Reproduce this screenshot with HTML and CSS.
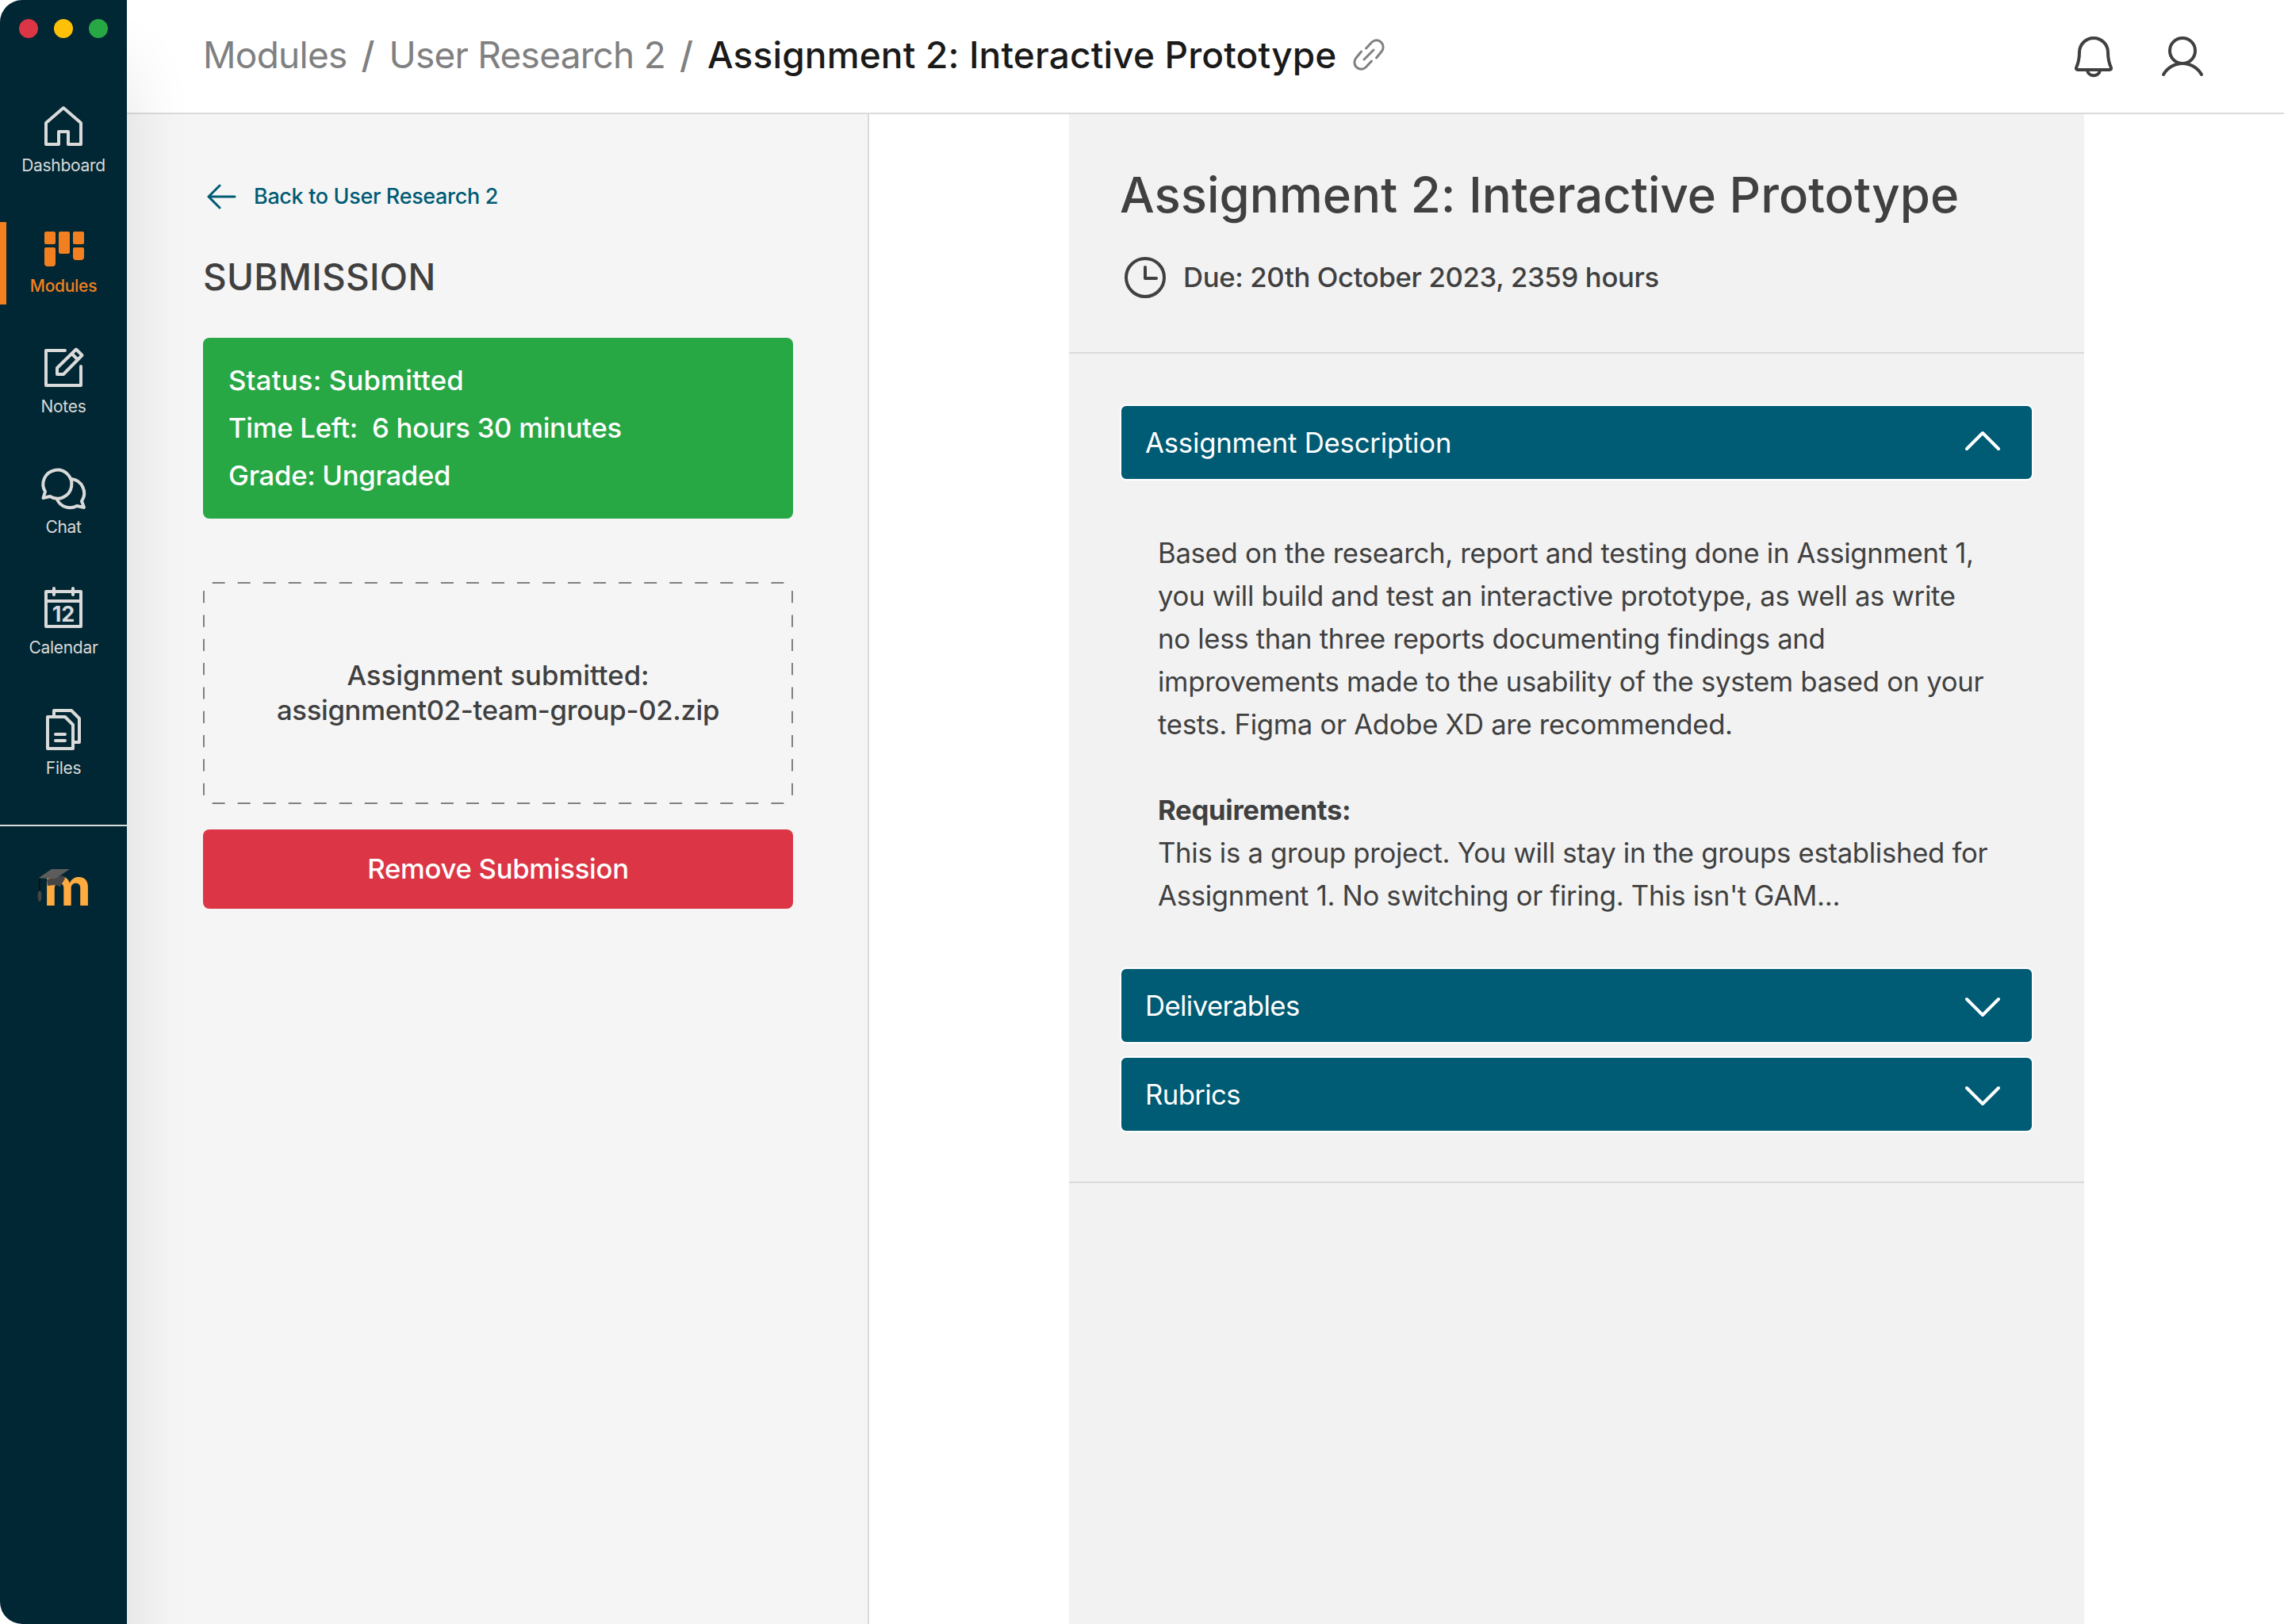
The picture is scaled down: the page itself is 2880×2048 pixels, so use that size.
FILE: index.html
```html
<!DOCTYPE html>
<html lang="en">
<head>
    <meta charset="UTF-8">
    <meta name="viewport" content="width=device-width, initial-scale=1.0">
    <title>Assignment 2: Interactive Prototype</title>
    <link rel="stylesheet" href="styles.css">
</head>
<body>
    <div class="window">
        <aside class="sidebar">
            <div class="window-buttons">
                <span class="dot red"></span>
                <span class="dot yellow"></span>
                <span class="dot green"></span>
            </div>

            <nav class="nav">
                <a class="nav-item">
                    <svg class="nav-icon" viewBox="0 0 64 64">
                        <path d="M32 8L54 27V54H38V38H26V54H10V27Z"/>
                    </svg>
                    <span>Dashboard</span>
                </a>
                <a class="nav-item active">
                    <svg class="nav-icon filled" viewBox="0 0 64 64">
                        <path d="M10 12H20Q22 12 22 14V26Q22 28 20 28H10Q8 28 8 26V14Q8 12 10 12Z"/>
                        <path d="M28 12H38Q40 12 40 14V38Q40 40 38 40H28Q26 40 26 38V14Q26 12 28 12Z"/>
                        <path d="M46 12H56Q58 12 58 14V26Q58 28 56 28H46Q44 28 44 26V14Q44 12 46 12Z"/>
                        <path d="M10 32H20Q22 32 22 34V52Q22 56 18 56H12Q8 56 8 52V34Q8 32 10 32Z"/>
                        <path d="M46 32H56Q58 32 58 34V44Q58 48 54 48H48Q44 48 44 44V34Q44 32 46 32Z"/>
                    </svg>
                    <span>Modules</span>
                </a>
                <a class="nav-item">
                    <svg class="nav-icon" viewBox="0 0 64 64">
                        <path d="M34 10H10V54H54V30"/>
                        <path d="M24 40V32L48 8.5L55.5 16L32 40ZM42.5 14L50 21.5"/>
                    </svg>
                    <span>Notes</span>
                </a>
                <a class="nav-item">
                    <svg class="nav-icon" viewBox="0 0 64 64">
                        <path d="M9 36L6.5 44L15 42A18 18 0 1 0 9 36Z"/>
                        <path d="M42 20A18 18 0 0 1 55 48L58 56L49 54A18 18 0 0 1 24 46"/>
                    </svg>
                    <span>Chat</span>
                </a>
                <a class="nav-item">
                    <svg class="nav-icon" viewBox="0 0 64 64">
                        <path d="M10 10H54V54H10ZM10 22H54M20 6V14M44 6V14"/>
                        <text class="calendar-day" x="32" y="48">12</text>
                    </svg>
                    <span>Calendar</span>
                </a>
                <a class="nav-item">
                    <svg class="nav-icon" viewBox="0 0 64 64">
                        <path d="M12 16H34L44 26V56H12Z"/>
                        <path d="M20 16V8H42L52 18V48H44M22 38H34M22 46H34"/>
                    </svg>
                    <span>Files</span>
                </a>
            </nav>

            <div class="brand">
                <svg width="80" height="72" viewBox="-8 -12 80 72">
                    <text class="brand-m" x="7" y="46" textLength="60" lengthAdjust="spacingAndGlyphs">m</text>
                    <path d="M11 13L31 8L34 12L28 22L22 20L12 21Z" fill="#464646"/>
                    <path d="M0 11.5L17 0H40L22 12Z" fill="#5c5c5c"/>
                    <path d="M2 12V28" stroke="#111" stroke-width="2"/>
                    <ellipse cx="2" cy="34" rx="2.5" ry="7" fill="#464646"/>
                </svg>
            </div>
        </aside>

        <div class="main">
            <header class="topbar">
                <div class="breadcrumb">
                    <a class="crumb">Modules</a>
                    <span class="slash">/</span>
                    <a class="crumb">User Research 2</a>
                    <span class="slash">/</span>
                    <span class="current">Assignment 2: Interactive Prototype</span>
                    <svg class="link-icon" viewBox="0 0 44 44">
                        <path d="M18.5 14L26 6A8.5 8.5 0 0 1 38 18L31.5 26"/>
                        <path d="M25.5 30L18 38A8.5 8.5 0 0 1 6 26L12.5 18"/>
                        <path d="M16 28L28 16"/>
                    </svg>
                </div>
                <div class="top-actions">
                    <svg class="top-icon" viewBox="0 0 64 64">
                        <path d="M14 26A18 18 0 0 1 50 26C50 36 52 41 54 45.5Q54.5 48 52 48H12Q9.5 48 10 45.5C12 41 14 36 14 26Z"/>
                        <path d="M24 49A8.2 8 0 0 0 40 49"/>
                    </svg>
                    <svg class="top-icon" viewBox="0 0 64 64">
                        <circle cx="32" cy="24" r="16"/>
                        <path d="M8 54A27.5 27.5 0 0 1 56 54"/>
                    </svg>
                </div>
            </header>

            <div class="content">
                <section class="submission">
                    <a class="back">
                        <svg width="40" height="32" viewBox="0 0 40 32">
                            <path d="M36 16H3M17 2L3 16L17 30"/>
                        </svg>
                        Back to User Research 2
                    </a>
                    <h2>SUBMISSION</h2>

                    <div class="status-card">
                        <p>Status: Submitted</p>
                        <p class="time">Time Left:&nbsp; 6 hours 30 minutes</p>
                        <p class="grade">Grade: Ungraded</p>
                    </div>

                    <div class="dropzone">
                        <!-- long dashes, css "dashed" is too short at 2px -->
                        <svg class="dropzone-border" viewBox="0 0 744 280">
                            <path pathLength="46" d="M4.5 4.5A12 12 0 0 1 13 1H731A12 12 0 0 1 739.5 4.5"/>
                            <path pathLength="46" d="M4.5 275.5A12 12 0 0 0 13 279H731A12 12 0 0 0 739.5 275.5"/>
                            <path pathLength="18" d="M4.5 4.5A12 12 0 0 0 1 13V267A12 12 0 0 0 4.5 275.5"/>
                            <path pathLength="18" d="M739.5 4.5A12 12 0 0 1 743 13V267A12 12 0 0 1 739.5 275.5"/>
                        </svg>
                        <p>Assignment submitted:</p>
                        <p class="filename">assignment02-team-group-02.zip</p>
                    </div>

                    <button class="remove">Remove Submission</button>
                </section>

                <section class="assignment">
                    <div class="assignment-head">
                        <h1>Assignment 2: Interactive Prototype</h1>
                        <div class="due">
                            <svg width="52" height="52" viewBox="0 0 52 52">
                                <circle cx="26" cy="26" r="24"/>
                                <path d="M26 13V27H40"/>
                            </svg>
                            <span>Due: 20th October 2023, 2359 hours</span>
                        </div>
                    </div>

                    <div class="accordion">
                        <div class="accordion-bar">
                            <span>Assignment Description</span>
                            <svg class="chevron" viewBox="0 0 44 32"><path d="M2 24L22 4L42 24"/></svg>
                        </div>
                        <div class="accordion-body">
                            <p>
                                Based on the research, report and testing done in Assignment 1,<br>
                                you will build and test an interactive prototype, as well as write<br>
                                no less than three reports documenting findings and<br>
                                improvements made to the usability of the system based on your<br>
                                tests. Figma or Adobe XD are recommended.
                            </p>
                            <p class="requirements">
                                <strong>Requirements:</strong><br>
                                This is a group project. You will stay in the groups established for<br>
                                Assignment 1. No switching or firing. This isn't GAM...
                            </p>
                        </div>
                        <div class="accordion-bar closed">
                            <span>Deliverables</span>
                            <svg class="chevron" viewBox="0 0 44 32"><path d="M2 8L22 28L42 8"/></svg>
                        </div>
                        <div class="accordion-bar closed">
                            <span>Rubrics</span>
                            <svg class="chevron" viewBox="0 0 44 32"><path d="M2 8L22 28L42 8"/></svg>
                        </div>
                    </div>
                </section>
            </div>
        </div>
    </div>
</body>
</html>
```
FILE: styles.css
```css
* {
    box-sizing: border-box;
    margin: 0;
    padding: 0;
}

body {
    background: #fff;
    font-family: Inter, "Open Sans", sans-serif;
    color: #404040;
}

svg {
    display: block;
    flex-shrink: 0;
    fill: none;
    stroke-linecap: round;
    stroke-linejoin: round;
}

.window {
    display: flex;
    height: 2048px;
    background: #fff;
    border-radius: 28px 0 0 28px;
    overflow: hidden;
}

/* Sidebar */
.sidebar {
    position: relative;
    z-index: 1;
    width: 160px;
    flex-shrink: 0;
    background: #002733;
    box-shadow: 8px 80px 80px rgba(0, 0, 0, 0.09);
}

.window-buttons {
    display: flex;
    gap: 20px;
    padding: 24px 24px 80px;
}

.dot {
    width: 24px;
    height: 24px;
    border-radius: 50%;
}

.red { background: #dc3545; }
.yellow { background: #ffc107; }
.green { background: #28a745; }

.nav {
    display: flex;
    flex-direction: column;
    gap: 48px;
    padding-bottom: 48px;
    border-bottom: 2px solid #dadada;
}

.nav-item {
    display: flex;
    flex-direction: column;
    align-items: center;
    height: 104px;
    font-size: 21px;
    line-height: 34px;
    letter-spacing: -0.3px;
    color: #dadada;
}

.nav-item.active {
    color: #f28020;
    font-weight: 500;
    background: linear-gradient(#f28020, #f28020) no-repeat left / 8px 100%;
}

.nav-icon {
    width: 64px;
    height: 64px;
    stroke: currentColor;
    stroke-width: 4;
}

.nav-icon.filled {
    fill: currentColor;
    stroke: none;
}

.calendar-day {
    font-size: 27px;
    font-weight: 700;
    letter-spacing: 0;
    text-anchor: middle;
    fill: currentColor;
    stroke: none;
}

.brand {
    display: flex;
    justify-content: center;
    padding-top: 42px;
}

.brand-m {
    font-size: 64px;
    font-weight: 700;
    line-height: 1;
    fill: #ffab40;
}

/* Top bar */
.main {
    flex: 1;
    display: flex;
    flex-direction: column;
}

.topbar {
    display: flex;
    justify-content: space-between;
    align-items: center;
    height: 144px;
    padding: 0 96px;
    border-bottom: 2px solid #dadada;
}

.breadcrumb {
    display: flex;
    align-items: center;
    gap: 18px;
    margin-top: -4px;
    font-size: 46px;
    white-space: nowrap;
}

.crumb {
    color: #808080;
    letter-spacing: -0.75px;
}

.slash {
    color: #808080;
    font-weight: 500;
}

.current {
    color: #1a1a1a;
    font-weight: 500;
    letter-spacing: 0.15px;
}

.link-icon {
    width: 44px;
    height: 44px;
    stroke: #808080;
    stroke-width: 3;
}

.top-actions {
    display: flex;
    gap: 48px;
    padding-top: 2px;
}

.top-icon {
    width: 64px;
    height: 64px;
    stroke: #404040;
    stroke-width: 4;
}

.content {
    flex: 1;
    display: flex;
}

/* Submission panel */
.submission {
    width: 936px;
    padding: 84px 94px 0 96px;
    background: #f5f5f5;
    border-right: 2px solid #dadada;
    font-size: 34.7px;
    font-weight: 500;
}

.back {
    display: flex;
    align-items: center;
    gap: 20px;
    padding-left: 4px;
    font-size: 27px;
    line-height: 40px;
    letter-spacing: -0.35px;
    color: #005b74;
}

.back svg {
    stroke: #005b74;
    stroke-width: 3;
}

h2 {
    margin: 51px 0 47px;
    font-size: 46px;
    font-weight: 500;
    line-height: 60px;
    letter-spacing: 0.3px;
}

.status-card {
    padding: 23px 32px 25px;
    border-radius: 8px;
    background: #28a745;
    color: #fff;
    line-height: 60px;
    letter-spacing: 0.2px;
}

.status-card .time,
.status-card .grade {
    letter-spacing: -0.3px;
}

.dropzone {
    position: relative;
    display: flex;
    flex-direction: column;
    justify-content: center;
    height: 280px;
    margin: 80px 0 32px;
    padding-bottom: 2px;
    text-align: center;
    line-height: 44px;
}

.dropzone-border {
    position: absolute;
    inset: 0;
    stroke: #808080;
    stroke-width: 2;
    stroke-linecap: butt;
    stroke-dasharray: 1 1;
    stroke-dashoffset: -0.5;
}

.filename {
    letter-spacing: -0.33px;
}

.remove {
    width: 100%;
    height: 100px;
    padding-bottom: 2px;
    border: none;
    border-radius: 8px;
    background: #dc3545;
    color: #fff;
    font: inherit;
    letter-spacing: -0.3px;
}

/* Assignment panel */
.assignment {
    width: 1280px;
    margin-left: 252px;
    background: #f2f2f2;
    font-size: 34.7px;
}

.assignment-head {
    padding: 62px 64px 68px;
    border-bottom: 2px solid #dadada;
}

h1 {
    font-size: 61.7px;
    font-weight: 500;
    line-height: 80px;
    letter-spacing: 0.03px;
    white-space: nowrap;
}

.due {
    display: flex;
    align-items: center;
    gap: 22px;
    margin-top: 38px;
    padding-left: 6px;
    font-weight: 500;
    letter-spacing: -0.35px;
}

.due span {
    padding-bottom: 2px;
}

.due svg {
    stroke: #404040;
    stroke-width: 4;
}

.accordion {
    padding: 64px 64px 62px;
    border-bottom: 2px solid #dadada;
}

.accordion-bar {
    display: flex;
    justify-content: space-between;
    align-items: center;
    height: 96px;
    padding: 0 40px 0 30px;
    border: 2px solid #fff;
    border-radius: 8px;
    background: #005b74;
    color: #fff;
    letter-spacing: -0.2px;
}

.accordion-bar.closed {
    letter-spacing: -0.6px;
}

.closed + .closed {
    margin-top: 16px;
}

.chevron {
    width: 44px;
    height: 32px;
    stroke: #fff;
    stroke-width: 4;
}

.accordion-body {
    padding: 64px 0 64px 48px;
    line-height: 54px;
    letter-spacing: -0.3px;
    white-space: nowrap;
}

.requirements {
    margin-top: 54px;
}
```
